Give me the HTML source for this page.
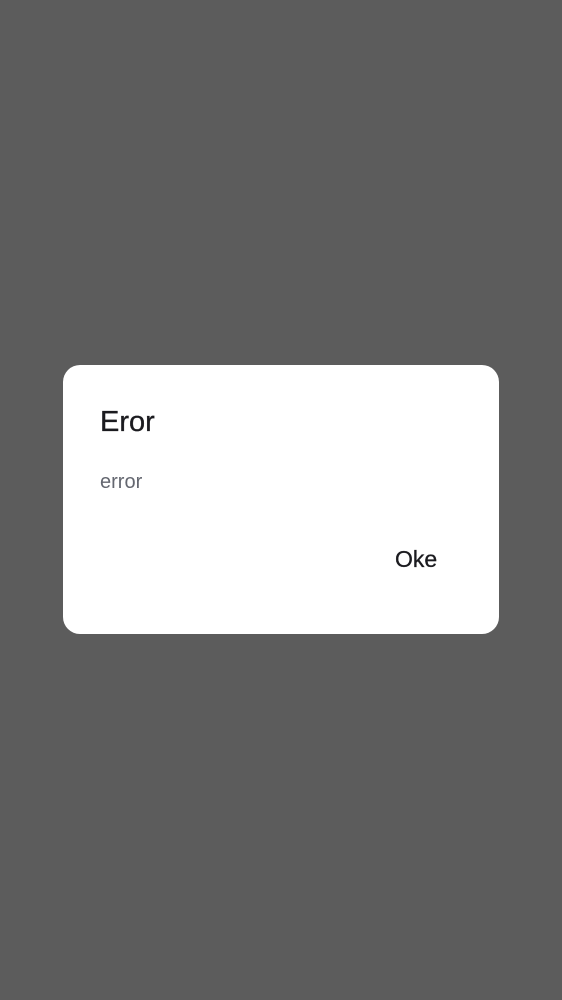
<!DOCTYPE html>
<html><head><meta charset="utf-8"><style>
html,body{margin:0;padding:0;width:562px;height:1000px;background:#5c5c5c;overflow:hidden;font-family:"Liberation Sans",sans-serif}
.d{position:absolute;left:63px;top:365px;width:436px;height:269px;background:#fff;border-radius:17px}
.t{position:absolute;left:37px;top:39px;font-size:29px;color:#1b1b1f;line-height:36px;-webkit-text-stroke:0.3px #1b1b1f}
.b{position:absolute;left:37px;top:103px;font-size:20px;color:#646770;line-height:28px}
.o{position:absolute;left:332px;top:178px;font-size:23px;color:#1b1b1f;line-height:32px;-webkit-text-stroke:0.3px #1b1b1f}
</style></head><body>
<div class="d"><div class="t">Eror</div><div class="b">error</div><div class="o">Oke</div></div>
</body></html>
